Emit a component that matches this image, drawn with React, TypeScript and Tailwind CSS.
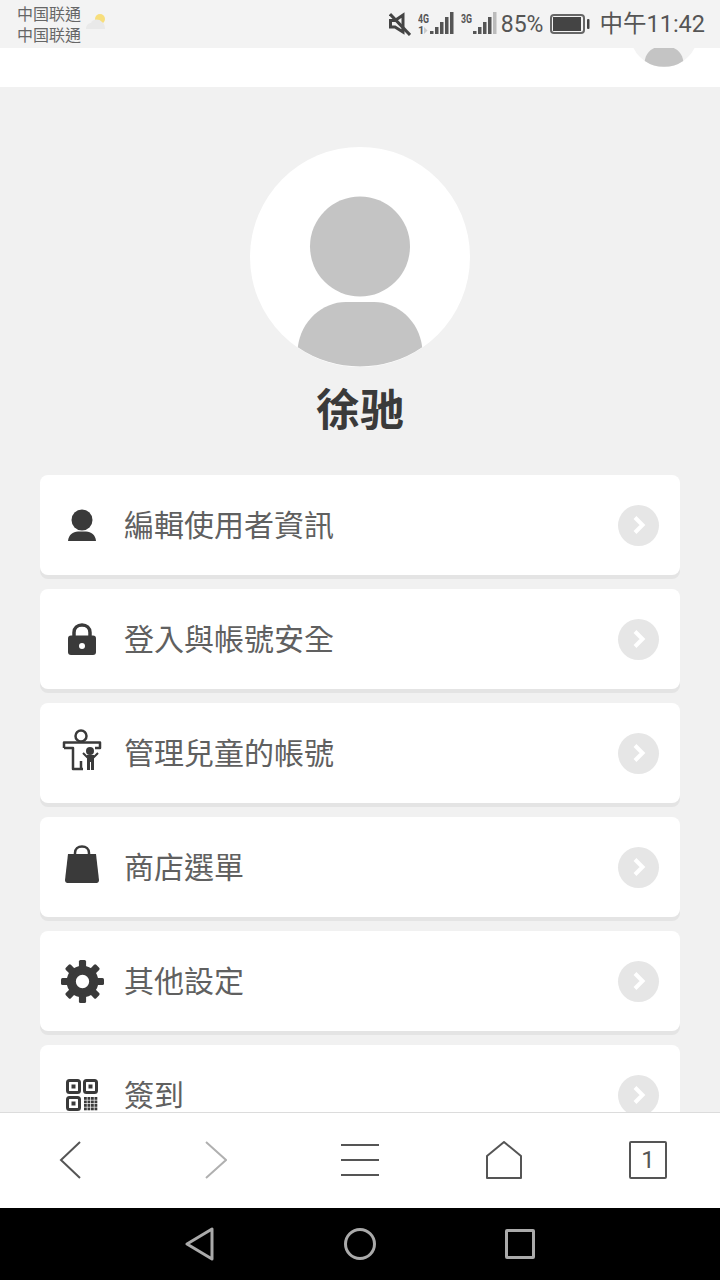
const font = { fontFamily: '"Noto Sans CJK TC", "Noto Sans", sans-serif' };

const PersonIcon = () => (
  <svg width="28" height="32" viewBox="0 0 28 32" fill="#3a3a3a">
    <circle cx="14" cy="11" r="10.500" />
    <path d="M0 32C0.500 26 5 22.500 10 22.500H18C23 22.500 27.500 26 28 32Z" />
  </svg>
);

const LockIcon = () => (
  <svg width="28" height="32" viewBox="0 0 28 32">
    <path d="M6 14V9.500C6 5 9.500 2 14 2S22 5 22 9.500V14" fill="none" stroke="#3a3a3a" strokeWidth="3.500" />
    <rect x="0" y="12.500" width="28" height="19.500" rx="3" fill="#3a3a3a" />
    <circle cx="14" cy="23" r="3" fill="#fff" />
  </svg>
);

const ChildIcon = () => (
  <svg width="40" height="42" viewBox="0 0 40 42" fill="none" stroke="#3a3a3a" strokeWidth="2.500" className="mb-[7px]">
    <circle cx="19" cy="7" r="5.500" />
    <path d="M2 19V13.500H38V19H33M2 19H11V40H21M19 32V40" strokeLinejoin="round" />
    <circle cx="28" cy="22" r="4" fill="#3a3a3a" stroke="none" />
    <path d="M25 26H32V41H29V33H28V41H25Z" fill="#3a3a3a" stroke="none" />
    <path d="M21 24L25.500 28.500M36 24L31.500 28.500" strokeWidth="2" />
  </svg>
);

const BagIcon = () => (
  <svg width="34" height="38" viewBox="0 0 34 38" className="mb-[7px]">
    <path d="M10 12V8C10 4 13 1.500 17 1.500S24 4 24 8V12" fill="none" stroke="#3a3a3a" strokeWidth="2.500" />
    <path d="M3 9H31L34 35C34 37 33 38 31.500 38H2.500C1 38 0 37 0 35Z" fill="#3a3a3a" />
  </svg>
);

const GearIcon = () => (
  <svg width="43" height="43" viewBox="0 0 42 42" fill="#3a3a3a">
    <circle cx="21" cy="21" r="11" fill="none" stroke="#3a3a3a" strokeWidth="9" />
    {[0, 45, 90, 135, 180, 225, 270, 315].map((deg) => (
      <rect key={deg} x="17.500" y="0" width="7" height="9" rx="1.500" transform={`rotate(${deg} 21 21)`} />
    ))}
  </svg>
);

const QrIcon = () => (
  <svg width="32" height="32" viewBox="0 0 32 32" fill="none">
    <rect x="1.500" y="1.500" width="12" height="12" rx="2" stroke="#3a3a3a" strokeWidth="3" />
    <rect x="18.500" y="1.500" width="12" height="12" rx="2" stroke="#3a3a3a" strokeWidth="3" />
    <rect x="1.500" y="18.500" width="12" height="12" rx="2" stroke="#3a3a3a" strokeWidth="3" />
    <rect x="5.500" y="5.500" width="4" height="4" fill="#3a3a3a" />
    <rect x="22.500" y="5.500" width="4" height="4" fill="#3a3a3a" />
    <rect x="5.500" y="22.500" width="4" height="4" fill="#3a3a3a" />
    <g fill="#3a3a3a">
      {[18, 21.500, 25, 28.500].map((x) =>
        [18, 21.500, 25, 28.500].map((y) => <rect key={`${x}-${y}`} x={x} y={y} width="2.800" height="2.800" />)
      )}
    </g>
  </svg>
);

const rows = [
  { label: '編輯使用者資訊', icon: <PersonIcon /> },
  { label: '登入與帳號安全', icon: <LockIcon /> },
  { label: '管理兒童的帳號', icon: <ChildIcon /> },
  { label: '商店選單', icon: <BagIcon /> },
  { label: '其他設定', icon: <GearIcon /> },
  { label: '簽到', icon: <QrIcon /> },
];

const Avatar = ({ size, bg }: { size: number; bg: string }) => (
  <svg width={size} height={size} viewBox="0 0 220 220" className="shrink-0">
    <circle cx="110" cy="110" r="110" fill={bg} />
    <circle cx="110" cy="99.500" r="50" fill="#c4c4c4" />
    <path d="M47.800 200.200C51 174 72 155 96 155H124C148 155 169 174 172.200 200.200A110 110 0 0 1 47.800 200.200Z" fill="#c4c4c4" />
  </svg>
);

const Signal = ({ label, small, last }: { label: string; small?: boolean; last?: boolean }) => (
  <svg width="36" height="26" viewBox="0 0 36 26">
    <text x="0" y="12" fontSize="13" fontWeight="700" fill="#555" fontFamily="Roboto, sans-serif" textLength="11" lengthAdjust="spacingAndGlyphs">{label}</text>
    {small && <text x="0" y="23" fontSize="11" fontWeight="700" fill="#555" fontFamily="Roboto, sans-serif">1</text>}
    {small && <path d="M6 16l3.500 3.500-3.500 3.500z" fill="#ccc" />}
    <rect x="12" y="20" width="3.500" height="3" fill="#555" />
    <rect x="17" y="16" width="3.500" height="7" fill="#555" />
    <rect x="22" y="11" width="3.500" height="12" fill="#555" />
    <rect x="27" y="6" width="3.500" height="17" fill="#555" />
    <rect x="32" y="1" width="3.500" height="22" fill={last ? '#bbb' : '#555'} />
  </svg>
);

const App = () => {
  return (
    <div className="w-[720px] h-[1280px] flex flex-col overflow-hidden bg-[#f1f1f1]" style={font}>
      {/* status bar */}
      <div className="h-[48px] shrink-0 bg-[#f3f3f3] flex items-center justify-between pl-[17px] pr-[15px] text-[#555]">
        <div className="flex items-center gap-[4px]">
          <div className="text-[16px] leading-[21px] text-[#666]">
            <div>中国联通</div>
            <div>中国联通</div>
          </div>
          <svg width="22" height="18" viewBox="0 0 22 18" className="mb-[4px]">
            <circle cx="15" cy="6" r="5" fill="#f7de7c" />
            <path d="M1 16C1 12 4 10 6 10C7 6 14 5 17 9C19 10 20 13 20 16Z" fill="#e9e9e9" />
          </svg>
        </div>
        <div className="flex items-center">
          <svg width="22" height="24" viewBox="0 0 22 24" fill="none" stroke="#444" strokeWidth="3" className="mr-[7px]">
            <path d="M1.500 8.500H6L14 3V20L6 15H1.500Z" />
            <path d="M1 2L21 23" />
          </svg>
          <Signal label="4G" small />
          <div className="w-[7px]" />
          <Signal label="3G" last />
          <span className="ml-[4px] text-[23px] leading-none" style={{ fontFamily: 'Roboto, sans-serif' }}>85%</span>
          <svg width="40" height="20" viewBox="0 0 40 20" className="ml-[7px]">
            <rect x="1" y="1" width="33" height="18" rx="3" fill="none" stroke="#666" strokeWidth="2" />
            <rect x="3" y="3" width="28" height="14" fill="#444" />
            <rect x="37" y="5" width="2.500" height="10" rx="1" fill="#444" />
          </svg>
          <span className="ml-[9px] text-[23.5px] leading-none whitespace-nowrap">
            中午<span style={{ fontFamily: 'Roboto, sans-serif' }}>11:42</span>
          </span>
        </div>
      </div>

      {/* page header */}
      <div className="h-[39px] shrink-0 bg-white relative overflow-hidden">
        <div className="absolute left-[630px] top-[-49px]">
          <Avatar size={68} bg="#f3f3f3" />
        </div>
      </div>

      {/* content */}
      <div className="flex-1 min-h-0 overflow-hidden flex flex-col items-center pt-[60px]">
        <Avatar size={220} bg="#fff" />
        <div className="mt-[10px] h-[60px] shrink-0 flex items-center text-[44px] font-bold text-[#3a3a3a]" style={{ fontFamily: '"Noto Sans CJK SC", sans-serif' }}>徐驰</div>
        <div className="mt-[38px] w-[640px] flex flex-col gap-[14px]">
          {rows.map((row) => (
            <div key={row.label} className="h-[100px] shrink-0 bg-white rounded-[8px] shadow-[0_4px_0_#e4e4e4] flex items-center pl-[20px] pr-[21px]">
              <div className="w-[44px] flex justify-center">{row.icon}</div>
              <span className="ml-[20px] mb-[5px] text-[30px] leading-none text-[#606060] flex-1">{row.label}</span>
              <div className="w-[41px] h-[41px] rounded-full bg-[#e6e6e6] flex items-center justify-center">
                <svg width="14" height="20" viewBox="0 0 14 20" fill="none" stroke="#fff" strokeWidth="4">
                  <path d="M3 2.500L10.500 10L3 17.500" />
                </svg>
              </div>
            </div>
          ))}
        </div>
      </div>

      {/* browser toolbar */}
      <div className="h-[96px] shrink-0 bg-white border-t border-[#dcdcdc] grid grid-cols-5 items-center justify-items-center pb-[2px]">
        <svg width="22" height="38" viewBox="0 0 22 38" fill="none" stroke="#555" strokeWidth="2" className="mr-[4px]"><path d="M21 1L2 19L21 37" /></svg>
        <svg width="22" height="38" viewBox="0 0 22 38" fill="none" stroke="#b0b0b0" strokeWidth="2"><path d="M1 1L21 19L1 37" /></svg>
        <svg width="38" height="34" viewBox="0 0 38 34" fill="none" stroke="#555" strokeWidth="2"><path d="M0 2H38M0 17H38M0 32H38" /></svg>
        <svg width="36" height="38" viewBox="0 0 36 38" fill="none" stroke="#555" strokeWidth="2"><path d="M1 15L18 1L35 15V37H1Z" strokeLinejoin="round" /></svg>
        <div className="w-[38px] h-[38px] border-2 border-[#555] rounded-[2px] flex items-center justify-center text-[24px] leading-none text-[#555]" style={{ fontFamily: 'Roboto, sans-serif' }}>1</div>
      </div>

      {/* android nav */}
      <div className="h-[72px] shrink-0 bg-black grid grid-cols-3 px-[120px] items-center justify-items-center">
        <svg width="30" height="34" viewBox="0 0 30 34" fill="none" stroke="#aaa" strokeWidth="3"><path d="M27 2V32L2 17Z" strokeLinejoin="round" /></svg>
        <div className="w-[32px] h-[32px] rounded-full border-[3px] border-[#aaa]" />
        <div className="w-[30px] h-[30px] rounded-[2px] border-[3px] border-[#aaa]" />
      </div>
    </div>
  );
};

export default App;
